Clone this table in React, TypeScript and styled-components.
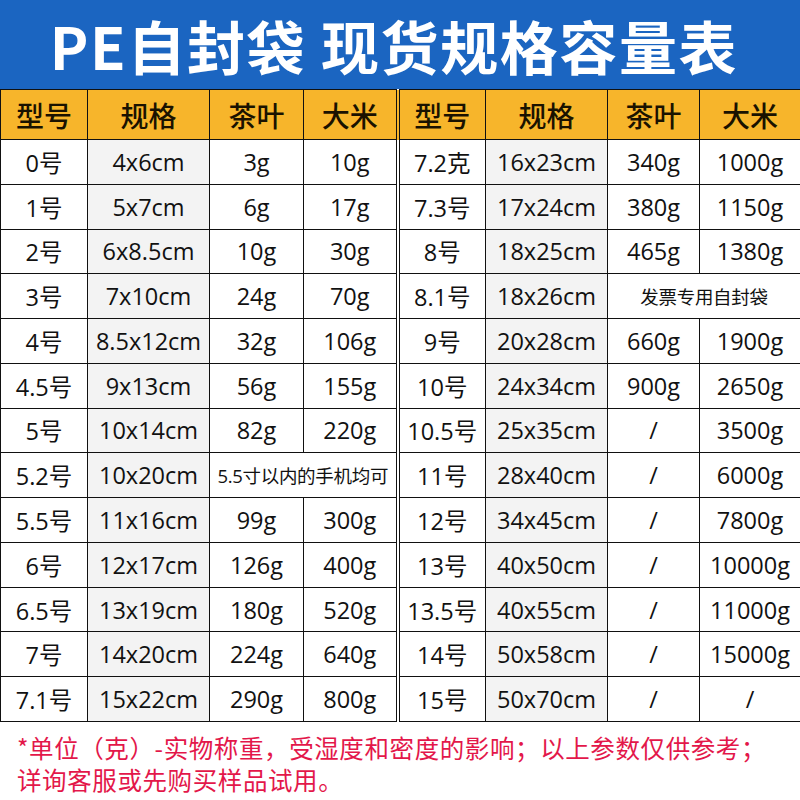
import React from "react";
import styled, { createGlobalStyle } from "styled-components";

const Global = createGlobalStyle`
  html, body { margin: 0; padding: 0; background: #fff; }
  body { width: 800px; height: 800px; overflow: hidden; }
`;

const Page = styled.div`
  width: 800px;
  height: 800px;
  display: flex;
  flex-direction: column;
  background: #fff;
  font-family: "Open Sans", "Noto Sans CJK SC", sans-serif;
  color: #111;
`;

const TitleBar = styled.div`
  height: 89px;
  background: #1b65c1;
  display: flex;
  align-items: center;
  justify-content: center;
  color: #fff;
  font-family: "Noto Sans CJK SC", sans-serif;
  font-weight: 700;
  font-size: 58px;
  letter-spacing: 1.6px;
  padding-right: 12px;
  box-sizing: border-box;
`;

const Table = styled.table`
  width: 800px;
  table-layout: fixed;
  border-collapse: collapse;
`;

const HeadRow = styled.tr`
  height: 50px;
  background: #f7b52b;
`;

const BodyRow = styled.tr`
  height: 44.77px;
`;

const Th = styled.th<{ $divider?: boolean }>`
  border: 1px solid #111;
  border-right: ${(p) => (p.$divider ? "4px double #111" : "1px solid #111")};
  padding: 0;
  font-family: "Noto Sans CJK SC", sans-serif;
  font-weight: 500;
  font-size: 28px;
  color: #1a1200;
  text-align: center;
  vertical-align: middle;
`;

const Td = styled.td<{ $divider?: boolean; $gray?: boolean; $small?: boolean }>`
  border: 1px solid #111;
  border-right: ${(p) => (p.$divider ? "4px double #111" : "1px solid #111")};
  padding: 0;
  background: ${(p) => (p.$gray ? "#f3f3f3" : "#fff")};
  font-size: ${(p) => (p.$small ? "18.5px" : "23.5px")};
  font-weight: 400;
  white-space: nowrap;
  text-align: center;
  vertical-align: middle;
  letter-spacing: ${(p) => (p.$small ? "-0.3px" : "0")};
`;

const Note = styled.div`
  padding: 10px 0 0 17px;
  color: #e3174a;
  font-family: "Noto Sans CJK SC", sans-serif;
  font-size: 24.5px;
  line-height: 32px;
  letter-spacing: 0.6px;
`;

type Row = string[];

const left: Row[] = [
  ["0号", "4x6cm", "3g", "10g"],
  ["1号", "5x7cm", "6g", "17g"],
  ["2号", "6x8.5cm", "10g", "30g"],
  ["3号", "7x10cm", "24g", "70g"],
  ["4号", "8.5x12cm", "32g", "106g"],
  ["4.5号", "9x13cm", "56g", "155g"],
  ["5号", "10x14cm", "82g", "220g"],
  ["5.2号", "10x20cm", "5.5寸以内的手机均可"],
  ["5.5号", "11x16cm", "99g", "300g"],
  ["6号", "12x17cm", "126g", "400g"],
  ["6.5号", "13x19cm", "180g", "520g"],
  ["7号", "14x20cm", "224g", "640g"],
  ["7.1号", "15x22cm", "290g", "800g"],
];

const right: Row[] = [
  ["7.2克", "16x23cm", "340g", "1000g"],
  ["7.3号", "17x24cm", "380g", "1150g"],
  ["8号", "18x25cm", "465g", "1380g"],
  ["8.1号", "18x26cm", "发票专用自封袋"],
  ["9号", "20x28cm", "660g", "1900g"],
  ["10号", "24x34cm", "900g", "2650g"],
  ["10.5号", "25x35cm", "/", "3500g"],
  ["11号", "28x40cm", "/", "6000g"],
  ["12号", "34x45cm", "/", "7800g"],
  ["13号", "40x50cm", "/", "10000g"],
  ["13.5号", "40x55cm", "/", "11000g"],
  ["14号", "50x58cm", "/", "15000g"],
  ["15号", "50x70cm", "/", "/"],
];

const widths = [87, 122, 94, 94, 88, 122, 92, 101];
const heads = ["型号", "规格", "茶叶", "大米"];

const Half: React.FC<{ row: Row; divider?: boolean }> = ({ row, divider }) => (
  <>
    <Td>{row[0]}</Td>
    <Td $gray>{row[1]}</Td>
    {row.length === 3 ? (
      <Td colSpan={2} $small $divider={divider}>
        {row[2]}
      </Td>
    ) : (
      <>
        <Td>{row[2]}</Td>
        <Td $divider={divider}>{row[3]}</Td>
      </>
    )}
  </>
);

export default function App() {
  return (
    <Page>
      <Global />
      <TitleBar>PE自封袋 现货规格容量表</TitleBar>
      <Table>
        <colgroup>
          {widths.map((w, i) => (
            <col key={i} style={{ width: w }} />
          ))}
        </colgroup>
        <thead>
          <HeadRow>
            {heads.map((h, i) => (
              <Th key={"l" + i} $divider={i === 3}>
                {h}
              </Th>
            ))}
            {heads.map((h, i) => (
              <Th key={"r" + i}>{h}</Th>
            ))}
          </HeadRow>
        </thead>
        <tbody>
          {left.map((l, i) => (
            <BodyRow key={i}>
              <Half row={l} divider />
              <Half row={right[i]} />
            </BodyRow>
          ))}
        </tbody>
      </Table>
      <Note>
        *单位（克）-实物称重，受湿度和密度的影响；以上参数仅供参考；
        <br />
        详询客服或先购买样品试用。
      </Note>
    </Page>
  );
}
